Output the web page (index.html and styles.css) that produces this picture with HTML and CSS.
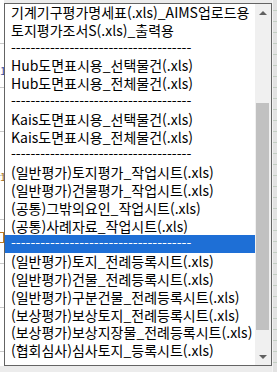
FILE: index.html
```html
<!DOCTYPE html>
<html lang="ko">
  <head>
    <meta charset="UTF-8" />
    <meta name="viewport" content="width=device-width, initial-scale=1.0" />
    <title>내보내기 목록</title>
    <link rel="stylesheet" href="styles.css">
  </head>
  <body>
    <div class="sheet">
      <div class="cells-left">
        <span class="cell-mark blue">1</span>
        <span class="cell-mark brown">1</span>
        <span class="cell-mark box"></span>
      </div>
      <div class="cells-right"></div>

      <div class="dropdown">
        <ul class="options">
          <li>기계기구평가명세표(.xls)_AIMS업로드용</li>
          <li>토지평가조서S(.xls)_출력용</li>
          <li>-------------------------------------</li>
          <li>Hub도면표시용_선택물건(.xls)</li>
          <li>Hub도면표시용_전체물건(.xls)</li>
          <li>-------------------------------------</li>
          <li>Kais도면표시용_선택물건(.xls)</li>
          <li>Kais도면표시용_전체물건(.xls)</li>
          <li>-------------------------------------</li>
          <li>(일반평가)토지평가_작업시트(.xls)</li>
          <li>(일반평가)건물평가_작업시트(.xls)</li>
          <li>(공통)그밖의요인_작업시트(.xls)</li>
          <li>(공통)사례자료_작업시트(.xls)</li>
          <li class="selected">-------------------------------------</li>
          <li>(일반평가)토지_전례등록시트(.xls)</li>
          <li>(일반평가)건물_전례등록시트(.xls)</li>
          <li>(일반평가)구분건물_전례등록시트(.xls)</li>
          <li>(보상평가)보상토지_전례등록시트(.xls)</li>
          <li>(보상평가)보상지장물_전례등록시트(.xls)</li>
          <li>(협회심사)심사토지_등록시트(.xls)</li>
        </ul>
        <div class="scrollbar">
          <div class="arrow-btn"><span class="arrow up"></span></div>
          <div class="track"><div class="thumb"></div></div>
          <div class="arrow-btn"><span class="arrow down"></span></div>
        </div>
      </div>
    </div>
  </body>
</html>
```

FILE: styles.css
```css
html {
  font-family: "Noto Sans CJK KR", "Noto Sans", sans-serif;
}

body {
  margin: 0;
  background-color: #e9e9e9;
}

.sheet {
  position: relative;
  width: 277px;
  height: 372px;
  overflow: hidden;
  background-color: #ececec;
}

/* spreadsheet cells peeking out at the sides */
.cells-left {
  position: absolute;
  left: 0;
  top: 0;
  width: 4px;
  height: 366px;
  background-color: #fff;
  background-image: repeating-linear-gradient(180deg, transparent 0, transparent 43px, #c9c9c9 43px, #c9c9c9 44px);
}

.cell-mark {
  position: absolute;
  left: 0;
  font-size: 11px;
  line-height: 12px;
}

.cell-mark.blue {
  top: 64px;
  color: #3a4a9a;
}

.cell-mark.brown {
  top: 170px;
  color: #a8701c;
}

.cell-mark.box {
  top: 232px;
  width: 3px;
  height: 9px;
  border: 1px solid #c07a20;
  border-left: none;
}

.cells-right {
  position: absolute;
  left: 272px;
  top: 0;
  width: 5px;
  height: 372px;
  background-color: #e3e3e3;
  border-left: 1px solid #f4f4f4;
  background-image: repeating-linear-gradient(180deg, transparent 0, transparent 10px, #c4cfc4 10px, #c4cfc4 11px);
}

/* dropdown list */
.dropdown {
  position: absolute;
  left: 4px;
  top: 3px;
  width: 266px;
  height: 361px;
  display: flex;
  background-color: #fff;
  border: 1px solid #646464;
}

.options {
  flex: 1;
  margin: 0;
  padding: 0;
  list-style: none;
  font-size: 14px;
  color: #000;
}

.options li {
  height: 17.8px;
  line-height: 17.8px;
  padding-left: 6px;
  white-space: nowrap;
}

.options li.selected {
  background-color: #1e6fd6;
  color: #fff;
}

.scrollbar {
  width: 16px;
  display: flex;
  flex-direction: column;
  background-color: #f0f0f0;
}

.arrow-btn {
  height: 17px;
  display: flex;
  align-items: center;
  justify-content: center;
}

.arrow {
  width: 0;
  height: 0;
  border-left: 4px solid transparent;
  border-right: 4px solid transparent;
}

.arrow.up {
  border-bottom: 4px solid #606060;
}

.arrow.down {
  border-top: 4px solid #606060;
}

.track {
  flex: 1;
}

.thumb {
  margin: 82px 2px 0 1px;
  height: 227px;
  background-color: #c1c1c1;
}
```
